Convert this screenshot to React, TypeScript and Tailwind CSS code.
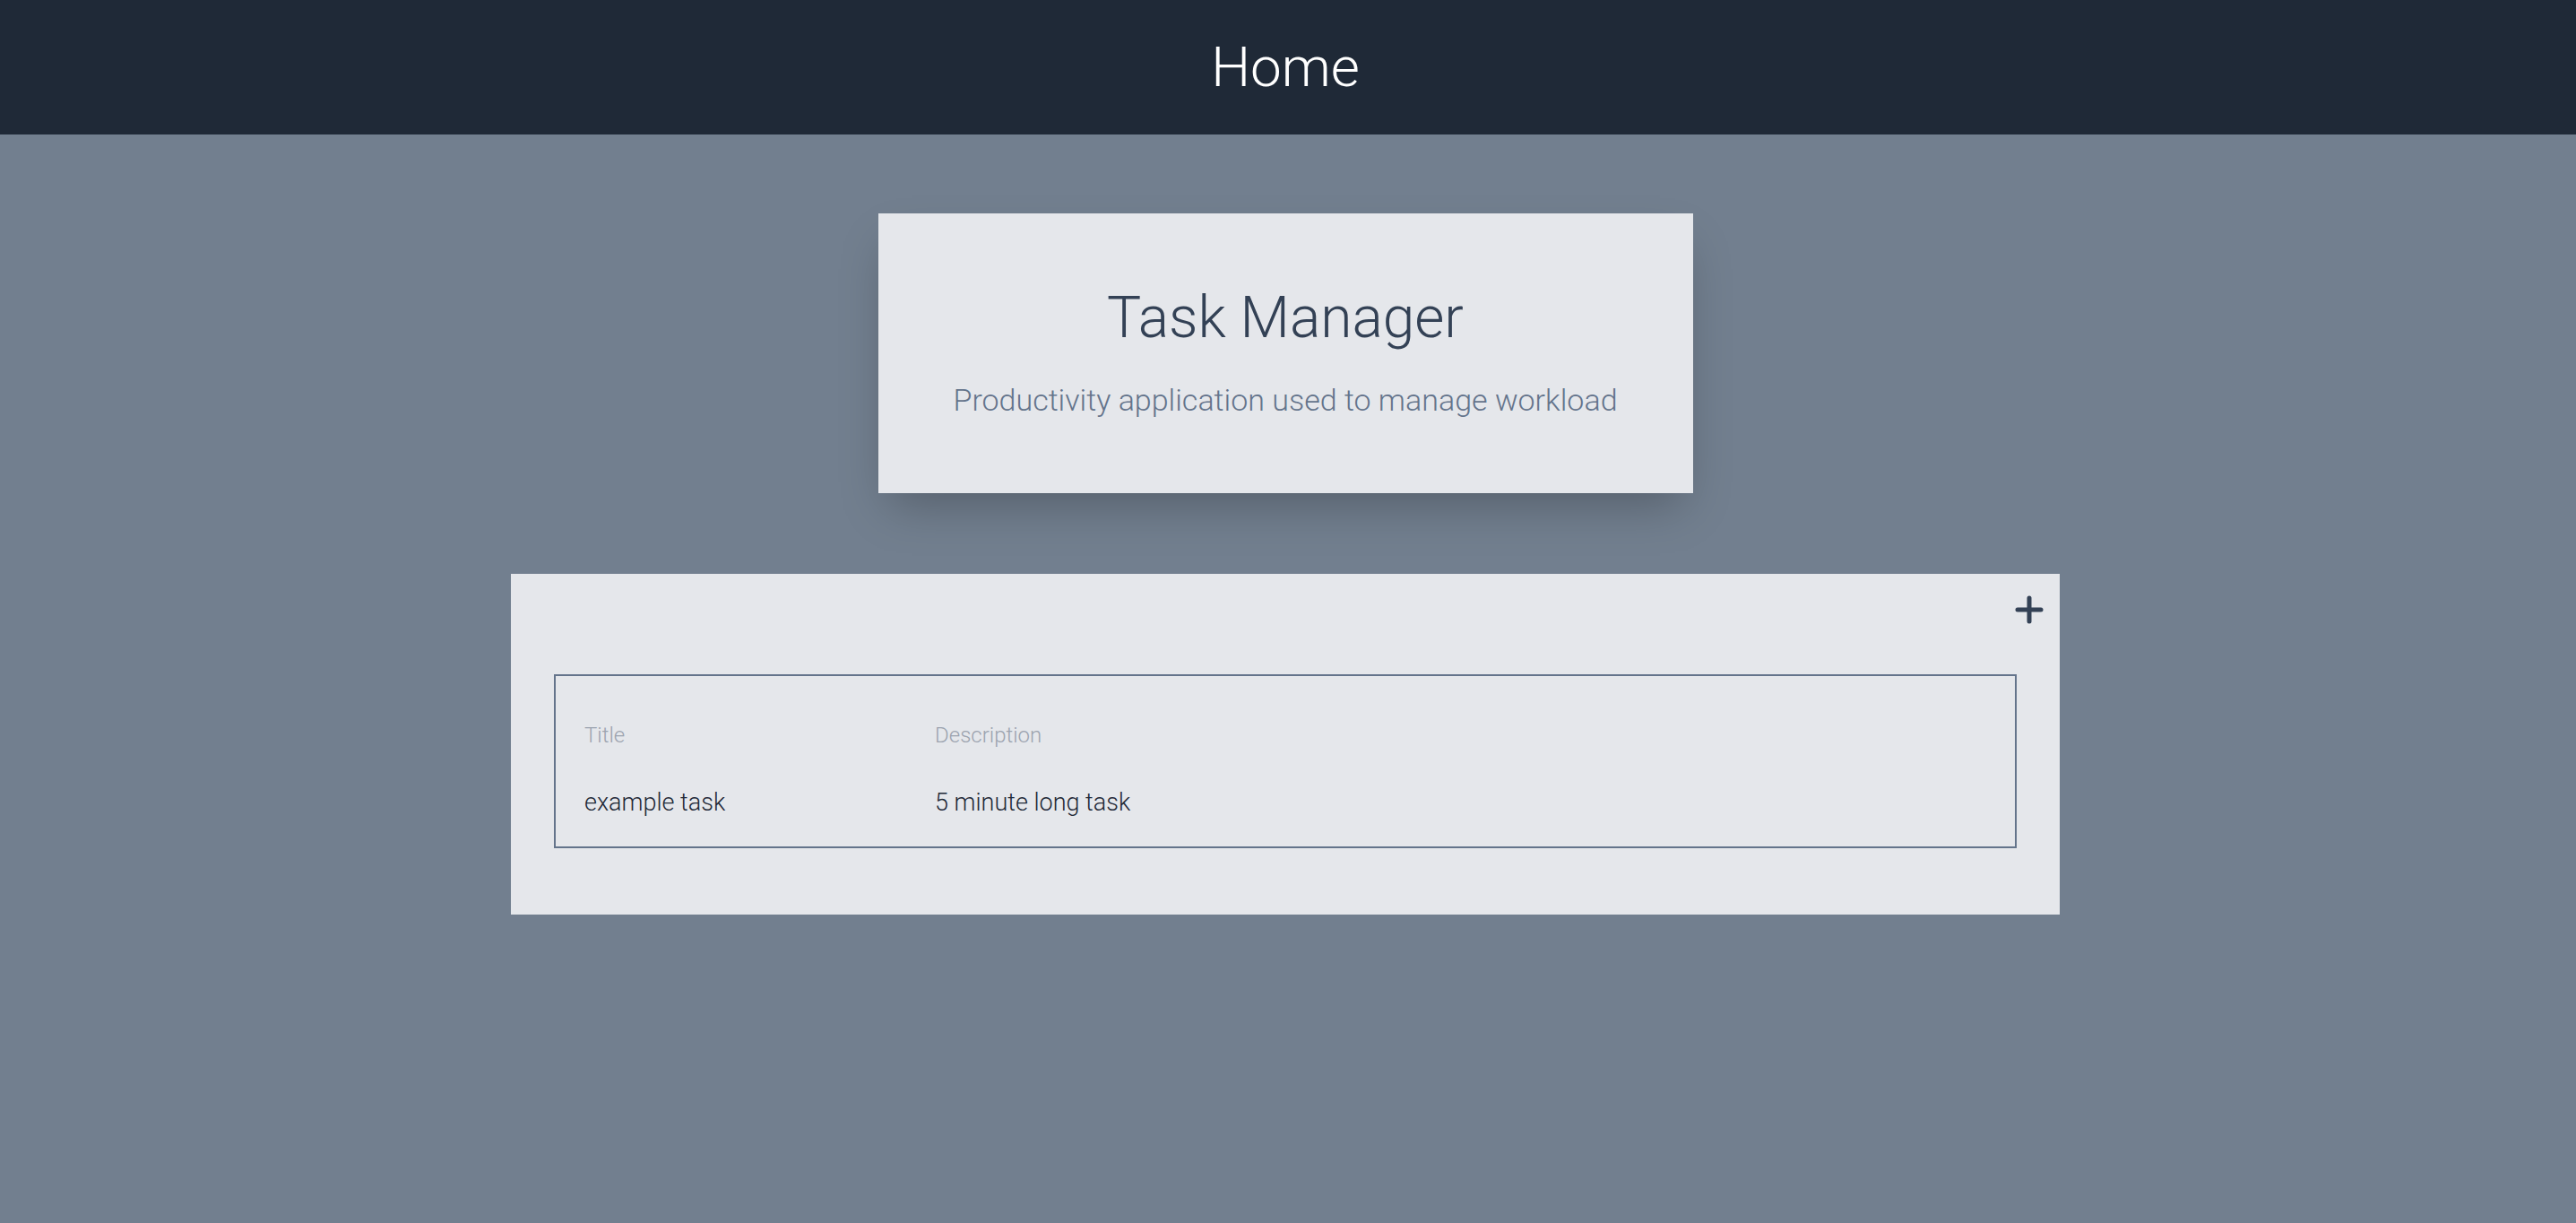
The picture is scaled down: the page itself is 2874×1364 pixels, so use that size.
import { FC } from 'react'

const font = { fontFamily: 'Roboto, "Open Sans", sans-serif' }

type Task = { title: string; description: string }

const tasks: Task[] = [{ title: 'example task', description: '5 minute long task' }]

const PlusIcon: FC = () => (
  <svg width="32" height="32" viewBox="0 0 32 32" fill="none" stroke="#334155" strokeWidth="5" strokeLinecap="round">
    <line x1="16" y1="3" x2="16" y2="29" />
    <line x1="3" y1="16" x2="29" y2="16" />
  </svg>
)

const TaskTable: FC<{ tasks: Task[] }> = ({ tasks }) => (
  <div className="border-2 border-[#64748b] pt-[54px] pb-[35px] pl-8">
    <div className="flex text-[24px] leading-none font-light text-[#9ca3af]">
      <div className="w-[391px]">Title</div>
      <div>Description</div>
    </div>
    {tasks.map((task) => (
      <div key={task.title} className="flex mt-[50px] text-[27px] leading-none font-light text-[#1f2937]">
        <div className="w-[391px]">{task.title}</div>
        <div>{task.description}</div>
      </div>
    ))}
  </div>
)

export default function App() {
  return (
    <div className="min-h-screen bg-[#727f8f] flex flex-col pr-[6px]" style={font}>
      <header className="h-[150px] bg-[#1f2937] -mr-[6px] pr-[6px] flex items-center justify-center">
        <h1 className="text-[62px] leading-none font-light text-white">Home</h1>
      </header>

      <main className="flex flex-col items-center pt-[88px]">
        <section className="w-[909px] h-[312px] bg-[#e5e7eb] shadow-2xl flex flex-col items-center pt-[85px]">
          <h2 className="text-[64px] leading-none font-light text-[#334155]">Task Manager</h2>
          <p className="mt-[42px] text-[34px] leading-none font-light text-[#64748b]">
            Productivity application used to manage workload
          </p>
        </section>

        <section className="mt-[90px] w-[1728px] h-[380px] bg-[#e5e7eb] flex flex-col">
          <div className="flex justify-end pt-6 pr-[18px]">
            <button className="w-8 h-8">
              <PlusIcon />
            </button>
          </div>
          <div className="mt-14 px-12">
            <TaskTable tasks={tasks} />
          </div>
        </section>
      </main>
    </div>
  )
}
